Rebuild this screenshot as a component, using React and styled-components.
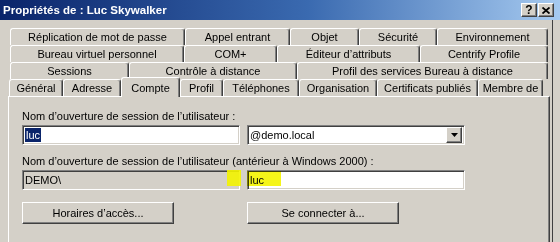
import React from "react";
import styled, { createGlobalStyle } from "styled-components";

const GlobalStyle = createGlobalStyle`
  html, body {
    margin: 0;
    padding: 0;
    background: #d4d0c8;
  }
  body {
    font-family: "Liberation Sans", Arial, sans-serif;
    font-size: 11px;
    color: #000;
  }
`;

const Window = styled.div`
  width: 560px;
  height: 242px;
  overflow: hidden;
  background: #d4d0c8;
  display: flex;
  flex-direction: column;
`;

const TitleBar = styled.div`
  flex: none;
  height: 20px;
  display: flex;
  align-items: center;
  justify-content: space-between;
  padding: 0 6px 0 3px;
  background: linear-gradient(to right, #0a246a 0%, #3a6ab0 55%, #a6caf0 100%);
`;

const Title = styled.span`
  color: #fff;
  font-weight: bold;
  font-size: 11.5px;
  white-space: nowrap;
`;

const CaptionButtons = styled.div`
  display: flex;
  gap: 1px;
`;

const CaptionButton = styled.div`
  width: 16px;
  height: 14px;
  box-sizing: border-box;
  background: #d4d0c8;
  border-top: 1px solid #fff;
  border-left: 1px solid #fff;
  border-right: 1px solid #404040;
  border-bottom: 1px solid #404040;
  box-shadow: inset -1px -1px 0 #808080;
  display: flex;
  align-items: center;
  justify-content: center;
  font-weight: bold;
  font-size: 12px;
  line-height: 1;
`;

const Frame = styled.div`
  flex: 1;
  width: 553px;
  box-sizing: border-box;
  border-right: 1px solid #404040;
  padding: 8px 0 0 8px;
  display: flex;
  flex-direction: column;
`;

const TabStrip = styled.div`
  display: flex;
  flex-direction: column;
`;

const TabRow = styled.div`
  display: flex;
  align-items: flex-start;
  height: 17px;
  margin-left: ${(p) => p.$indent}px;
`;

const Tab = styled.div`
  flex: none;
  width: ${(p) => p.$w}px;
  height: ${(p) => (p.$active ? 20 : 17)}px;
  margin-top: ${(p) => (p.$active ? -2 : 0)}px;
  position: ${(p) => (p.$active ? "relative" : "static")};
  z-index: ${(p) => (p.$active ? 2 : "auto")};
  box-sizing: border-box;
  background: #d4d0c8;
  border-top: 1px solid #fff;
  border-left: 1px solid #fff;
  border-right: 1px solid #404040;
  box-shadow: inset -1px 0 0 #808080;
  border-radius: 3px 3px 0 0;
  display: flex;
  align-items: center;
  justify-content: center;
  white-space: nowrap;
  overflow: hidden;
`;

const Panel = styled.div`
  flex: 1;
  width: 542px;
  box-sizing: border-box;
  border-top: 1px solid #fff;
  border-left: 1px solid #fff;
  border-right: 1px solid #404040;
  box-shadow: inset -1px 0 0 #808080;
  padding: 12px 0 0 13px;
`;

const Label = styled.div`
  line-height: 14px;
  margin-top: ${(p) => p.$gap || 0}px;
  margin-bottom: 2px;
  white-space: nowrap;
`;

const FieldRow = styled.div`
  display: flex;
  gap: 7px;
  position: relative;
`;

const TextBox = styled.div`
  width: 218px;
  height: 20px;
  box-sizing: border-box;
  background: ${(p) => (p.$readOnly ? "#d4d0c8" : "#fff")};
  border-top: 1px solid #808080;
  border-left: 1px solid #808080;
  border-right: 1px solid #fff;
  border-bottom: 1px solid #fff;
  box-shadow: inset 1px 1px 0 #404040, inset -1px -1px 0 #d4d0c8;
  display: flex;
  align-items: center;
  justify-content: space-between;
  padding: 0 2px 0 2px;
  white-space: nowrap;
`;

const Selected = styled.span`
  background: #0a246a;
  color: #fff;
  line-height: 14px;
  padding: 0 1px;
`;

const DropButton = styled.div`
  width: 16px;
  height: 16px;
  box-sizing: border-box;
  background: #d4d0c8;
  border-top: 1px solid #fff;
  border-left: 1px solid #fff;
  border-right: 1px solid #404040;
  border-bottom: 1px solid #404040;
  box-shadow: inset -1px -1px 0 #808080;
  display: flex;
  align-items: center;
  justify-content: center;
`;

const Highlight = styled.span`
  position: absolute;
  top: ${(p) => p.$top}px;
  left: ${(p) => p.$left}px;
  width: ${(p) => p.$width}px;
  height: ${(p) => p.$height}px;
  background: #f4f400;
  mix-blend-mode: ${(p) => (p.$multiply ? "multiply" : "normal")};
  opacity: 0.9;
  filter: blur(0.6px);
  pointer-events: none;
`;

const ButtonRow = styled.div`
  display: flex;
  gap: 73px;
  margin-top: 12px;
`;

const Button = styled.div`
  width: 152px;
  height: 22px;
  box-sizing: border-box;
  background: #d4d0c8;
  border-top: 1px solid #fff;
  border-left: 1px solid #fff;
  border-right: 1px solid #404040;
  border-bottom: 1px solid #404040;
  box-shadow: inset -1px -1px 0 #808080;
  display: flex;
  align-items: center;
  justify-content: center;
`;

const rows = [
  {
    indent: 2,
    tabs: [
      ["Réplication de mot de passe", 175],
      ["Appel entrant", 105],
      ["Objet", 69],
      ["Sécurité", 78],
      ["Environnement", 111],
    ],
  },
  {
    indent: 2,
    tabs: [
      ["Bureau virtuel personnel", 174],
      ["COM+", 93],
      ["Éditeur d’attributs", 143],
      ["Centrify Profile", 128],
    ],
  },
  {
    indent: 2,
    tabs: [
      ["Sessions", 119],
      ["Contrôle à distance", 168],
      ["Profil des services Bureau à distance", 251],
    ],
  },
  {
    indent: 1,
    tabs: [
      ["Général", 54],
      ["Adresse", 58],
      ["Compte", 59, true],
      ["Profil", 43],
      ["Téléphones", 76],
      ["Organisation", 78],
      ["Certificats publiés", 101],
      ["Membre de", 65],
    ],
  },
];

export default function App() {
  return (
    <>
      <GlobalStyle />
      <Window>
        <TitleBar>
          <Title>Propriétés de : Luc Skywalker</Title>
          <CaptionButtons>
            <CaptionButton>?</CaptionButton>
            <CaptionButton>
              <svg width="8" height="7" viewBox="0 0 8 7">
                <path d="M0.5 0.5 L7.5 6.5 M7.5 0.5 L0.5 6.5" stroke="#000" strokeWidth="1.8" />
              </svg>
            </CaptionButton>
          </CaptionButtons>
        </TitleBar>
        <Frame>
          <TabStrip>
            {rows.map((row, i) => (
              <TabRow key={i} $indent={row.indent}>
                {row.tabs.map(([label, w, active]) => (
                  <Tab key={label} $w={w} $active={active}>
                    {label}
                  </Tab>
                ))}
              </TabRow>
            ))}
          </TabStrip>
          <Panel>
            <Label>Nom d’ouverture de session de l’utilisateur :</Label>
            <FieldRow>
              <TextBox>
                <Selected>luc</Selected>
              </TextBox>
              <TextBox>
                <span>@demo.local</span>
                <DropButton>
                  <svg width="7" height="4" viewBox="0 0 7 4">
                    <path d="M0 0 H7 L3.5 4 Z" fill="#000" />
                  </svg>
                </DropButton>
              </TextBox>
            </FieldRow>
            <Label $gap={9}>
              Nom d’ouverture de session de l’utilisateur (antérieur à Windows 2000) :
            </Label>
            <FieldRow>
              <TextBox $readOnly>DEMO\</TextBox>
              <TextBox>luc</TextBox>
              <Highlight $left={205} $top={0} $width={14} $height={16} />
              <Highlight $left={225} $top={1} $width={34} $height={15} $multiply />
            </FieldRow>
            <ButtonRow>
              <Button>Horaires d’accès...</Button>
              <Button>Se connecter à...</Button>
            </ButtonRow>
          </Panel>
        </Frame>
      </Window>
    </>
  );
}
